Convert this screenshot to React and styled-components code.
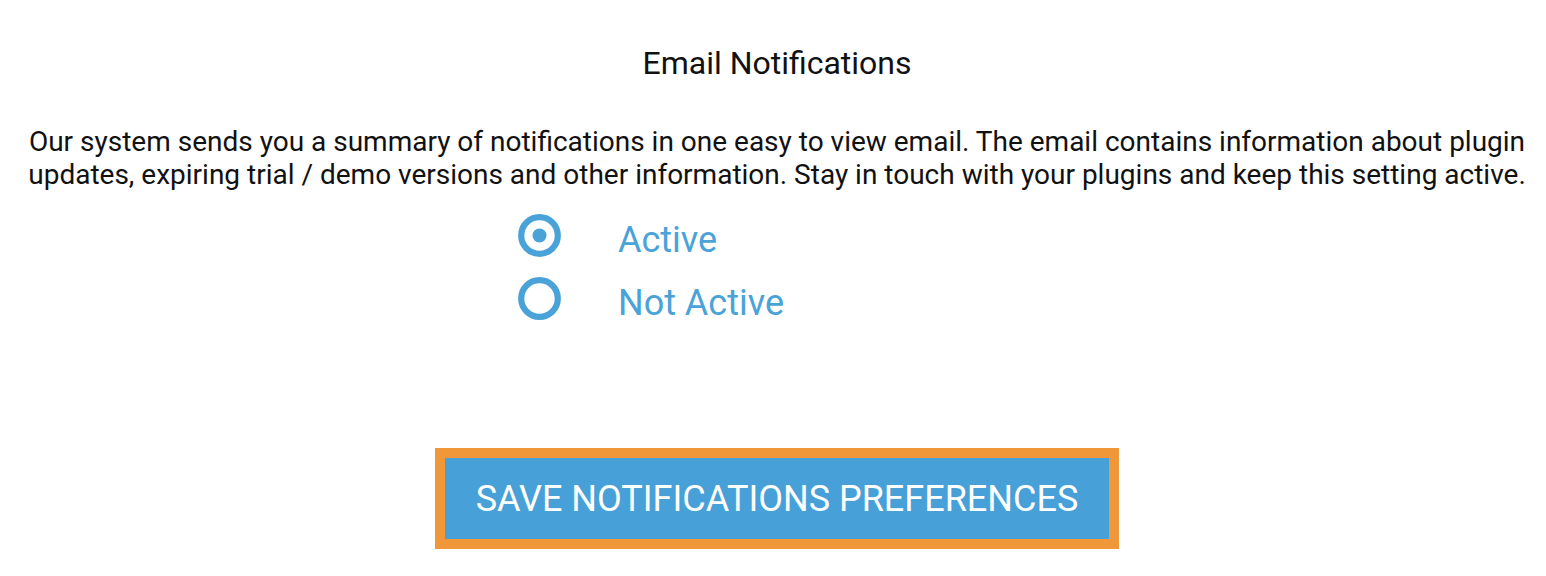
import React, { useState } from "react";
import styled, { createGlobalStyle } from "styled-components";

const GlobalStyle = createGlobalStyle`
  body {
    margin: 0;
    background: #ffffff;
    font-family: Roboto, "Liberation Sans", Arial, sans-serif;
  }
`;

const Page = styled.div`
  width: 1546px;
  height: 576px;
  display: flex;
  flex-direction: column;
  align-items: center;
  padding: 44px 0 0 8px;
  box-sizing: border-box;
`;

const Title = styled.h2`
  margin: 0;
  font-size: 32px;
  font-weight: 400;
  line-height: 38px;
  color: #111;
`;

const Description = styled.p`
  margin: 43px 0 0;
  font-size: 28px;
  line-height: 33px;
  text-align: center;
  color: #111;
  white-space: nowrap;
`;

const Options = styled.div`
  display: flex;
  flex-direction: column;
  gap: 20px;
  margin-top: 23px;
  margin-left: -252px;
`;

const Option = styled.label`
  display: flex;
  align-items: flex-start;
  gap: 57px;
  height: 43px;
  cursor: pointer;
  font-size: 36px;
  line-height: 43px;
  color: #4aa3d8;
`;

const OptionText = styled.span`
  display: block;
  margin-top: 5px;
`;

const HiddenInput = styled.input`
  display: none;
`;

const Button = styled.button`
  margin-top: 128px;
  padding: 0 31px;
  height: 101px;
  border: 10px solid #f0973a;
  background: #47a1d8;
  color: #fff;
  font-family: Roboto, "Liberation Sans", Arial, sans-serif;
  font-size: 36px;
  text-transform: uppercase;
  cursor: pointer;
  box-sizing: border-box;
`;

const RadioIcon = ({ checked }) => (
  <svg width="43" height="43" viewBox="0 0 43 43">
    <circle cx="21.5" cy="21.5" r="18.3" fill="none" stroke="#4aa3d8" strokeWidth="6.2" />
    {checked && <circle cx="21.5" cy="21.5" r="7" fill="#4aa3d8" />}
  </svg>
);

const App = () => {
  const [active, setActive] = useState(true);
  return (
    <Page>
      <GlobalStyle />
      <Title>Email Notifications</Title>
      <Description>
        Our system sends you a summary of notifications in one easy to view email. The email contains information about plugin
        <br />
        updates, expiring trial / demo versions and other information. Stay in touch with your plugins and keep this setting active.
      </Description>
      <Options>
        <Option>
          <HiddenInput type="radio" checked={active} onChange={() => setActive(true)} />
          <RadioIcon checked={active} />
          <OptionText>Active</OptionText>
        </Option>
        <Option>
          <HiddenInput type="radio" checked={!active} onChange={() => setActive(false)} />
          <RadioIcon checked={!active} />
          <OptionText>Not Active</OptionText>
        </Option>
      </Options>
      <Button type="button">Save Notifications Preferences</Button>
    </Page>
  );
};

export default App;
